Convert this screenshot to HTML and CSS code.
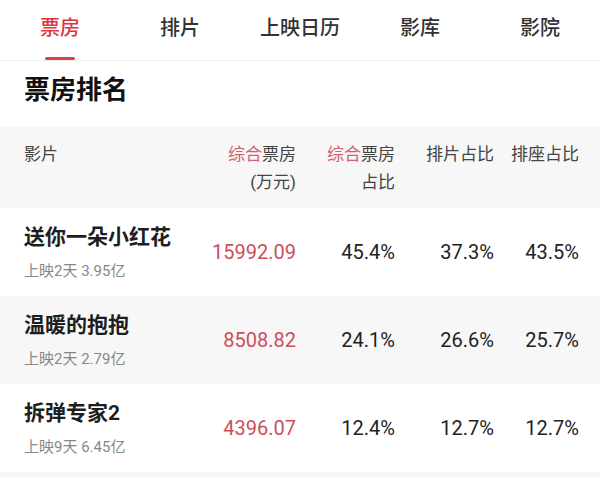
FILE: index.html
```html
<!DOCTYPE html>
<html lang="zh-CN">
<head>
    <meta charset="UTF-8">
    <meta name="viewport" content="width=device-width, initial-scale=1.0">
    <title>票房排名</title>
    <link rel="stylesheet" href="styles.css">
</head>
<body>
<nav class="tabs">
    <a class="tab active">票房</a>
    <a class="tab">排片</a>
    <a class="tab">上映日历</a>
    <a class="tab">影库</a>
    <a class="tab">影院</a>
</nav>

<h1 class="title">票房排名</h1>

<div class="table">
    <div class="row head">
        <div class="cell name">影片</div>
        <div class="cell num"><span class="hl">综合</span>票房<br/>(万元)</div>
        <div class="cell num"><span class="hl">综合</span>票房<br/>占比</div>
        <div class="cell num">排片占比</div>
        <div class="cell num">排座占比</div>
    </div>
    <div class="row">
        <div class="cell name">
            <div class="movie">送你一朵小红花</div>
            <div class="sub">上映2天 3.95亿</div>
        </div>
        <div class="cell num money">15992.09</div>
        <div class="cell num">45.4%</div>
        <div class="cell num">37.3%</div>
        <div class="cell num">43.5%</div>
    </div>
    <div class="row">
        <div class="cell name">
            <div class="movie">温暖的抱抱</div>
            <div class="sub">上映2天 2.79亿</div>
        </div>
        <div class="cell num money">8508.82</div>
        <div class="cell num">24.1%</div>
        <div class="cell num">26.6%</div>
        <div class="cell num">25.7%</div>
    </div>
    <div class="row">
        <div class="cell name">
            <div class="movie">拆弹专家2</div>
            <div class="sub">上映9天 6.45亿</div>
        </div>
        <div class="cell num money">4396.07</div>
        <div class="cell num">12.4%</div>
        <div class="cell num">12.7%</div>
        <div class="cell num">12.7%</div>
    </div>
    <div class="row tail"></div>
</div>
</body>
</html>
```

FILE: styles.css
```css
* {
    margin: 0;
    padding: 0;
    box-sizing: border-box;
}
body {
    width: 600px;
    background: #fff;
    color: #222;
    font-family: Roboto, "Noto Sans CJK SC", sans-serif;
}

/* 顶部导航 */
.tabs {
    display: flex;
    height: 61px;
    border-bottom: 1px solid #eeeeee;
}
.tab {
    position: relative;
    flex: 1;
    text-align: center;
    font-size: 20px;
    font-weight: 500;
    line-height: 56px;
    color: #333;
}
.tab.active {
    color: #e0333e;
}
.tab.active::after {
    content: "";
    position: absolute;
    left: 45px;
    bottom: 0;
    width: 30px;
    height: 3px;
    border-radius: 2px;
    background: #d8404a;
}

.title {
    height: 66px;
    padding-left: 24px;
    font-size: 26px;
    line-height: 58px;
    font-weight: 700;
    color: #111;
}

/* 表格 */
.row {
    display: grid;
    grid-template-columns: 172px 100px 99px 99px 85px;
    align-items: center;
    height: 88px;
    padding: 0 21px 0 24px;
}
.row:nth-child(odd) {
    background: #f7f7f7;
}
.row.head {
    align-items: start;
    height: 81px;
    padding-top: 13px;
    font-size: 17px;
    line-height: 28px;
    color: #444;
}
.row.tail {
    height: 10px;
}
.num {
    text-align: right;
    font-size: 20px;
    color: #222;
}
.head .num {
    font-size: 17px;
    color: #444;
}
.hl {
    color: #d4606f;
}
.money {
    color: #cc4e5d;
}
.movie {
    font-size: 21px;
    line-height: 28px;
    font-weight: 700;
    color: #1e1e1e;
}
.sub {
    margin-top: 10px;
    font-size: 15px;
    line-height: 20px;
    color: #888;
}
```
